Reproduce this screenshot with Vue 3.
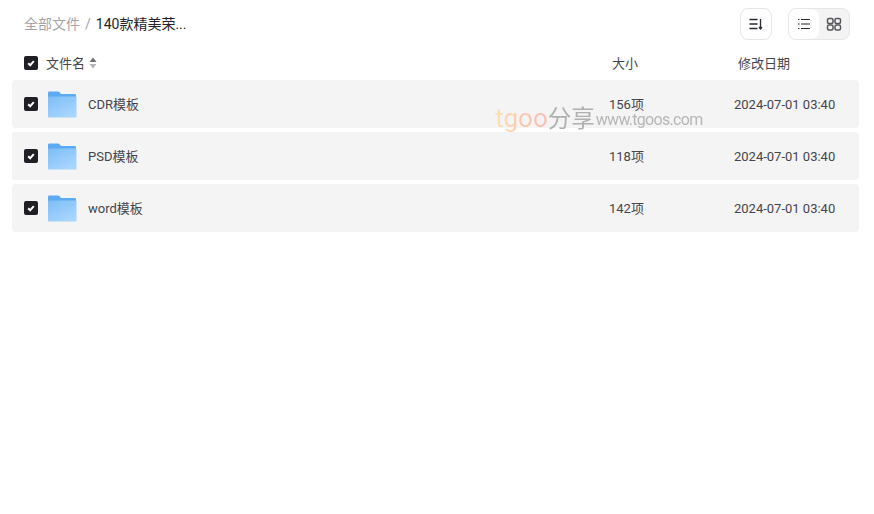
<template>
  <div class="page">
    <div class="topbar">
      <div class="crumbs">
        <span class="crumb-root">全部文件</span>
        <span class="crumb-sep">/</span>
        <span class="crumb-cur">140款精美荣...</span>
      </div>
      <div class="tools">
        <button class="tool-btn">
          <svg width="16" height="16" viewBox="0 0 16 16" fill="none" stroke="#2a2a30" stroke-width="1.3">
            <path d="M1.500 3.500h8M1.500 8h8M1.500 12.500h8" />
            <path d="M12.500 3v9.500" />
            <path d="M11 11l1.500 2 1.500-2" />
          </svg>
        </button>
        <div class="view-switch">
          <div class="view-item active">
            <svg width="16" height="16" viewBox="0 0 16 16" fill="none" stroke="#2a2a30" stroke-width="1.2">
              <path d="M2 3.500h1.500M2 8h1.500M2 12.500h1.500M5 3.500h9M5 8h9M5 12.500h9" />
            </svg>
          </div>
          <div class="view-item">
            <svg width="16" height="16" viewBox="0 0 16 16" fill="none" stroke="#55555a" stroke-width="1.500">
              <rect x="1.500" y="2.500" width="5.500" height="5" rx="1.500" />
              <rect x="9" y="2.500" width="5.500" height="5" rx="1.500" />
              <rect x="1.500" y="9" width="5.500" height="5" rx="1.500" />
              <rect x="9" y="9" width="5.500" height="5" rx="1.500" />
            </svg>
          </div>
        </div>
      </div>
    </div>

    <div class="head">
      <span class="check">
        <svg width="10" height="10" viewBox="0 0 10 10" fill="none" stroke="#fff" stroke-width="2">
          <path d="M2.200 5.200l2 2 3.600-4" />
        </svg>
      </span>
      <span class="head-name">文件名</span>
      <svg class="sort" width="8" height="12" viewBox="0 0 8 12">
        <path d="M4 .5l3.500 4.500H.5z" fill="#6f6f74" />
        <path d="M4 11.500L.5 7h7z" fill="#b4b4b8" />
      </svg>
      <span class="head-size">大小</span>
      <span class="head-date">修改日期</span>
    </div>

    <div class="list">
      <div v-for="row in rows" :key="row.name" class="row">
        <span class="check">
          <svg width="10" height="10" viewBox="0 0 10 10" fill="none" stroke="#fff" stroke-width="2">
            <path d="M2.200 5.200l2 2 3.600-4" />
          </svg>
        </span>
        <svg class="folder" width="30" height="28" viewBox="0 0 30 28">
          <defs>
            <linearGradient id="fold" x1="0" y1="0" x2="0.7" y2="1">
              <stop offset="0" stop-color="#7dbdf7" />
              <stop offset="1" stop-color="#a9d6fd" />
            </linearGradient>
          </defs>
          <path d="M1 3c0-1 .6-1.500 1.500-1.500h8.500c.8 0 1.300.4 1.800 1l1.200 1.500h13.500c1 0 1.500.5 1.500 1.500V9H1z" fill="#5eaaf2" />
          <rect x="1" y="6.500" width="28.500" height="21" rx="1" fill="url(#fold)" />
          <rect x="24" y="10" width="3" height="1.500" fill="#8cc4f6" />
        </svg>
        <span class="name">{{ row.name }}</span>
        <span class="size">{{ row.size }}</span>
        <span class="date">2024-07-01 03:40</span>
      </div>
      <div class="watermark">
        <span class="wm-brand">tgoo</span><span class="wm-cn">分享</span><span class="wm-url">www.tgoos.com</span>
      </div>
    </div>
  </div>
</template>

<script setup>
const rows = [
  { name: 'CDR模板', size: '156项' },
  { name: 'PSD模板', size: '118项' },
  { name: 'word模板', size: '142项' },
]
</script>

<style>
body {
  background: #fff;
}
</style>

<style scoped>
.page {
  width: 874px;
  height: 514px;
  box-sizing: border-box;
  padding: 8px 15px 0 12px;
  font-family: Roboto, "Noto Sans CJK SC", sans-serif;
  font-size: 13px;
  color: #45454d;
  overflow: hidden;
}
.topbar {
  display: flex;
  align-items: center;
  justify-content: space-between;
  height: 32px;
  padding: 0 9px 0 12px;
}
.crumbs {
  display: flex;
  align-items: center;
  font-size: 14px;
  line-height: 32px;
  margin-top: -1px;
}
.crumb-root {
  color: #a3a3a8;
}
.crumb-sep {
  color: #a3a3a8;
  margin: 0 5px;
}
.crumb-cur {
  color: #25252b;
}
.tools {
  display: flex;
  gap: 16px;
}
.tool-btn {
  width: 32px;
  height: 32px;
  padding: 0;
  box-sizing: border-box;
  background: #fff;
  border: 1px solid #e6e6e8;
  border-radius: 8px;
  display: flex;
  align-items: center;
  justify-content: center;
}
.view-switch {
  display: flex;
  width: 62px;
  height: 32px;
  box-sizing: border-box;
  border: 1px solid #e6e6e8;
  border-radius: 8px;
  background: #f3f3f4;
  overflow: hidden;
}
.view-item {
  flex: 1;
  display: flex;
  align-items: center;
  justify-content: center;
}
.view-item.active {
  background: #fff;
  border-radius: 0 8px 8px 0;
}
.head {
  display: flex;
  align-items: center;
  height: 40px;
  padding: 5px 0 0 12px;
  box-sizing: border-box;
}
.check {
  flex: none;
  width: 14px;
  height: 14px;
  border-radius: 2px;
  background: #1f1f26;
  display: flex;
  align-items: center;
  justify-content: center;
}
.head-name {
  margin-left: 8px;
}
.sort {
  margin-left: 4px;
}
.head-size {
  margin-left: 515px;
  width: 126px;
}
.head-date {
  white-space: nowrap;
}
.list {
  position: relative;
  display: flex;
  flex-direction: column;
  gap: 4px;
}
.row {
  display: flex;
  align-items: center;
  height: 48px;
  padding-left: 12px;
  background: #f4f4f4;
  border-radius: 4px;
}
.folder {
  flex: none;
  margin-left: 9px;
}
.name {
  margin: 0 0 2px 11px;
  width: 521px;
  flex: none;
}
.size {
  width: 125px;
  flex: none;
  margin-bottom: 2px;
}
.date {
  white-space: nowrap;
}
.watermark {
  position: absolute;
  left: 483px;
  top: 20px;
  display: flex;
  align-items: baseline;
  white-space: nowrap;
  opacity: 0.9;
}
.wm-brand {
  font-size: 26px;
  line-height: 34px;
  background: linear-gradient(90deg, #fbe3a8, #fcc4a8, #fbb8b0);
  -webkit-background-clip: text;
  background-clip: text;
  color: transparent;
}
.wm-cn {
  font-size: 23.500px;
  color: #a9a9a9;
}
.wm-url {
  font-size: 16px;
  letter-spacing: -0.7px;
  color: #b0b0b0;
  margin-left: 1px;
  transform: translateY(-2px);
}
</style>
